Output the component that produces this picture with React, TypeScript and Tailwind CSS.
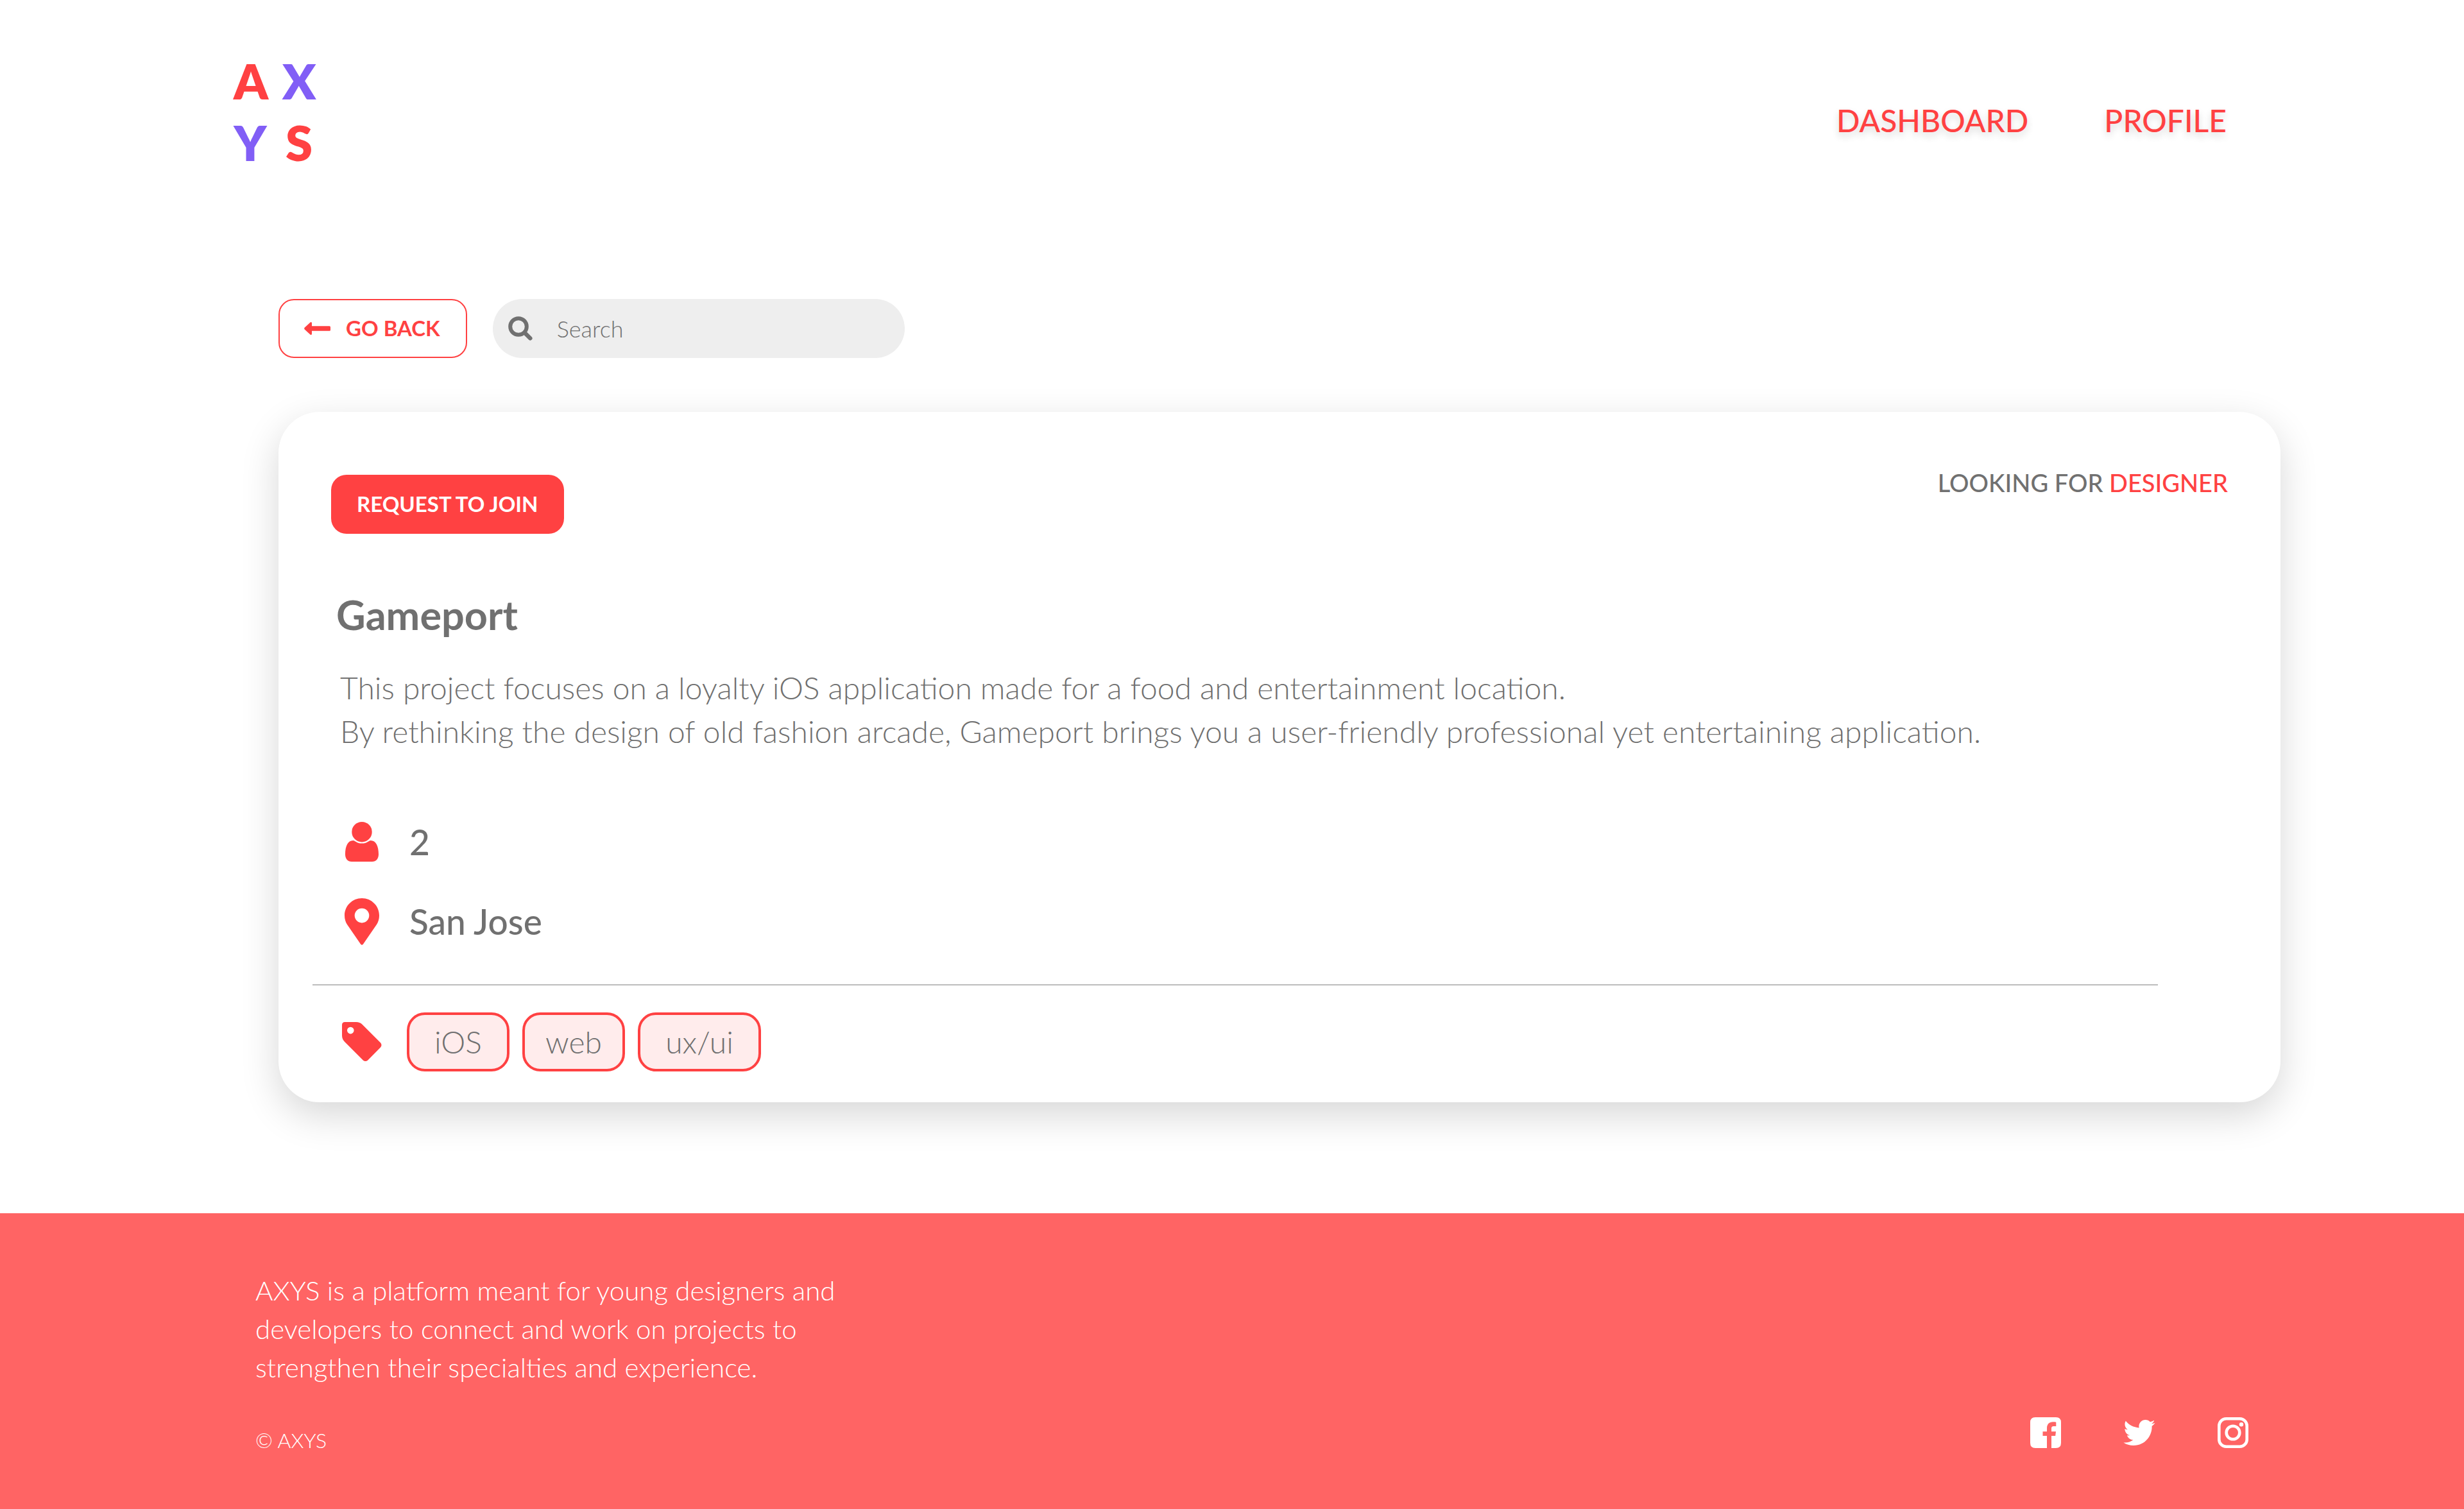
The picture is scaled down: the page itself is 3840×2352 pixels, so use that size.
import type { ReactNode } from "react";

function ArrowLeftIcon() {
  return (
    <svg viewBox="0 0 41 20" className="h-5 w-[41px] shrink-0" fill="currentColor" aria-hidden="true">
      <path d="M9 1C10.500-.6 12-.2 12 2V6.300H39.500Q41 6.300 41 8V12.200Q41 13.800 39.500 13.800H12V18C12 20.200 10.500 20.600 9 19L.8 11.500Q-.5 10 .8 8.500Z" />
    </svg>
  );
}

function SearchIcon() {
  return (
    <svg viewBox="0 0 38 38" className="h-[38px] w-[38px] shrink-0" fill="none" stroke="currentColor" aria-hidden="true">
      <circle cx="16" cy="16" r="12.800" strokeWidth="6" />
      <path d="M25.500 25.500L34.300 34.300" strokeWidth="6.500" strokeLinecap="round" />
    </svg>
  );
}

function UserIcon() {
  return (
    <svg viewBox="0 0 52 62" className="h-[62px] w-[52px]" fill="currentColor" aria-hidden="true">
      <circle cx="26" cy="15.700" r="15.700" />
      <path d="M12.500 29C4 29 0 38 0 50.500C0 57.500 4 62 10 62H42C48 62 52 57.500 52 50.500C52 38 48 29 39.500 29C37 29 34 33.600 26 33.600S15 29 12.500 29Z" />
    </svg>
  );
}

function PinIcon() {
  return (
    <svg viewBox="0 0 54 73" className="h-[73px] w-[54px]" fill="currentColor" aria-hidden="true">
      <path
        fillRule="evenodd"
        d="M27 0C12 0 0 12 0 27C0 32.500 1.500 37 4 41L25 71.500Q27 74 29 71.500L50 41C52.500 37 54 32.500 54 27C54 12 42 0 27 0ZM27 15.800A11.300 11.300 0 1 1 27 38.400A11.300 11.300 0 1 1 27 15.800Z"
      />
    </svg>
  );
}

function TagIcon() {
  return (
    <svg viewBox="0 0 62 62" className="h-[62px] w-[62px]" fill="currentColor" aria-hidden="true">
      <path
        fillRule="evenodd"
        d="M0 4.500Q0 0 4.500 0H22C26 0 29 1.200 31.500 3.700L60 32.300Q63 36 60 39.500L40 59.700Q36.500 62.500 33 59.700L4.300 31C1.500 28.200 0 25 0 21ZM13.300 7.800A5.300 5.300 0 1 0 13.300 18.400A5.300 5.300 0 1 0 13.300 7.800Z"
      />
    </svg>
  );
}

function FacebookIcon() {
  return (
    <svg viewBox="0 0 48 48" className="size-12" fill="currentColor" aria-hidden="true">
      <path d="M8 0H40Q48 0 48 8V40Q48 48 40 48H33V29H39.200L40 22.300H33V17.500C33 15.300 33.700 14 36.500 14H40.300V7.800C39.500 7.500 37.500 7.300 35.500 7.300C29.500 7.300 26 11 26 17V22.300H19.500V29H26V48H8Q0 48 0 40V8Q0 0 8 0Z" />
    </svg>
  );
}

function TwitterIcon() {
  return (
    <svg viewBox="0 48 512 416" className="h-10 w-[50px]" fill="currentColor" aria-hidden="true">
      <path d="M459.370 151.716c.325 4.548.325 9.097.325 13.645 0 138.720-105.583 298.558-298.558 298.558-59.452 0-114.680-17.219-161.137-47.106 8.447.974 16.568 1.299 25.340 1.299 49.055 0 94.213-16.568 130.274-44.832-46.132-.975-84.792-31.188-98.112-72.772 6.498.974 12.995 1.624 19.818 1.624 9.421 0 18.843-1.300 27.614-3.573-48.081-9.747-84.143-51.980-84.143-102.985v-1.299c13.969 7.797 30.214 12.670 47.431 13.319-28.264-18.843-46.781-51.005-46.781-87.391 0-19.492 5.197-37.360 14.294-52.954 51.655 63.675 129.300 105.258 216.365 109.807-1.624-7.797-2.599-15.918-2.599-24.040 0-57.828 46.782-104.934 104.934-104.934 30.213 0 57.502 12.670 76.670 33.137 23.715-4.548 46.456-13.320 66.599-25.340-7.798 24.366-24.366 44.833-46.132 57.827 21.117-2.273 41.584-8.122 60.426-16.243-14.292 20.791-32.161 39.308-52.628 54.253z" />
    </svg>
  );
}

function InstagramIcon() {
  return (
    <svg viewBox="0 0 48 48" className="size-12" fill="none" stroke="currentColor" aria-hidden="true">
      <rect x="2.300" y="2.300" width="43.400" height="43.400" rx="11" strokeWidth="4.600" />
      <circle cx="24" cy="24" r="10.300" strokeWidth="4.600" />
      <circle cx="37" cy="11.200" r="3.200" fill="currentColor" stroke="none" />
    </svg>
  );
}

function Fact({ icon, children }: { icon: ReactNode; children: ReactNode }) {
  return (
    <li className="flex h-[72px] items-center gap-[42px]">
      <span className="flex w-16 justify-center text-[#ff4142]">{icon}</span>
      {children}
    </li>
  );
}

const socials = [
  { label: "Facebook", icon: <FacebookIcon /> },
  { label: "Twitter", icon: <TwitterIcon /> },
  { label: "Instagram", icon: <InstagramIcon /> },
];

export default function App() {
  return (
    <div className="flex min-h-screen flex-col bg-white font-['Lato',sans-serif] text-[#707070]">
      <header className="flex items-start justify-between pt-[78px] pr-[370px] pl-[364px]">
        <a
          href="#"
          aria-label="AXYS"
          className="grid grid-cols-[52px_52px] gap-x-6 text-center text-[76px] leading-[96px] font-extrabold text-[#ff4142]"
        >
          <span>A</span>
          <span className="text-[#815ef6]">X</span>
          <span className="text-[#815ef6]">Y</span>
          <span>S</span>
        </a>
        <nav className="mt-[82px] flex gap-[118px] text-[48px] leading-14 font-medium text-[#ff4142] [text-shadow:0_6px_12px_rgba(0,0,0,0.16)]">
          <a href="#">DASHBOARD</a>
          <a href="#">PROFILE</a>
        </nav>
      </header>

      <main className="pt-[196px] pr-[286px] pb-[173px] pl-[434px]">
        <div className="flex items-center gap-10">
          <button
            type="button"
            className="flex h-[92px] items-center gap-6 rounded-3xl border-2 border-[#ff4142] pr-10 pl-[38px] text-[33px] font-bold text-[#ff4142]"
          >
            <ArrowLeftIcon />
            GO BACK
          </button>
          <label className="flex h-[92px] w-[642px] items-center gap-[38px] rounded-full bg-[#eeeeee] pr-10 pl-6">
            <SearchIcon />
            <input
              type="search"
              aria-label="Search"
              placeholder="Search"
              className="min-w-0 flex-1 bg-transparent text-[36px] font-light outline-none placeholder:text-[#707070]"
            />
          </label>
        </div>

        <section className="mt-[84px] rounded-[64px] bg-white pt-[98px] pb-12 shadow-[0_20px_60px_rgba(0,0,0,0.16)]">
          <div className="px-[82px]">
            <div className="flex items-start justify-between">
              <button
                type="button"
                className="h-[92px] rounded-3xl bg-[#ff4142] px-10 text-[33px] font-bold text-white"
              >
                REQUEST TO JOIN
              </button>
              <p className="text-[38px] leading-6 font-medium">
                LOOKING FOR <span className="text-[#ff4142]">DESIGNER</span>
              </p>
            </div>
            <h1 className="mt-[88px] pl-2 text-[63px] leading-[76px] font-bold">Gameport</h1>
            <p className="mt-[42px] pl-[14px] text-[48px] leading-[68px] font-light">
              This project focuses on a loyalty iOS application made for a food and entertainment location.
              <br />
              By rethinking the design of old fashion arcade, Gameport brings you a user-friendly professional yet
              entertaining application.
            </p>
            <ul className="mt-[102px] flex flex-col gap-[52px] pl-4 text-[55px] font-medium">
              <Fact icon={<UserIcon />}>2</Fact>
              <Fact icon={<PinIcon />}>San Jose</Fact>
            </ul>
          </div>
          <hr className="mt-[62px] mr-[191px] ml-[53px] border-t-2 border-[#bcbcbc]" />
          <div className="mt-[42px] flex items-center gap-[38px] px-[98px]">
            <span className="flex w-16 shrink-0 justify-center text-[#ff4142]">
              <TagIcon />
            </span>
            <ul className="flex gap-5 text-[48px] font-light">
              <li className="flex h-[92px] w-40 items-center justify-center rounded-[28px] border-4 border-[#ff4142] bg-[#ffecec]">
                iOS
              </li>
              <li className="flex h-[92px] w-40 items-center justify-center rounded-[28px] border-4 border-[#ff4142] bg-[#ffecec]">
                web
              </li>
              <li className="flex h-[92px] w-48 items-center justify-center rounded-[28px] border-4 border-[#ff4142] bg-[#ffecec]">
                ux/ui
              </li>
            </ul>
          </div>
        </section>
      </main>

      <footer className="flex flex-1 items-start bg-[#ff6464] pt-[90px] pr-[336px] pb-20 pl-[398px] text-white">
        <div className="flex flex-1 items-end justify-between">
          <div className="font-light">
            <p className="max-w-[940px] text-[42px] leading-[60px]">
              AXYS is a platform meant for young designers and developers to connect and work on projects to strengthen
              their specialties and experience.
            </p>
            <p className="mt-[60px] text-[32px] leading-12">© AXYS</p>
          </div>
          <ul className="flex items-center gap-[97px] pb-3">
            {socials.map((s) => (
              <li key={s.label}>
                <a href="#" aria-label={s.label} className="block">
                  {s.icon}
                </a>
              </li>
            ))}
          </ul>
        </div>
      </footer>
    </div>
  );
}
